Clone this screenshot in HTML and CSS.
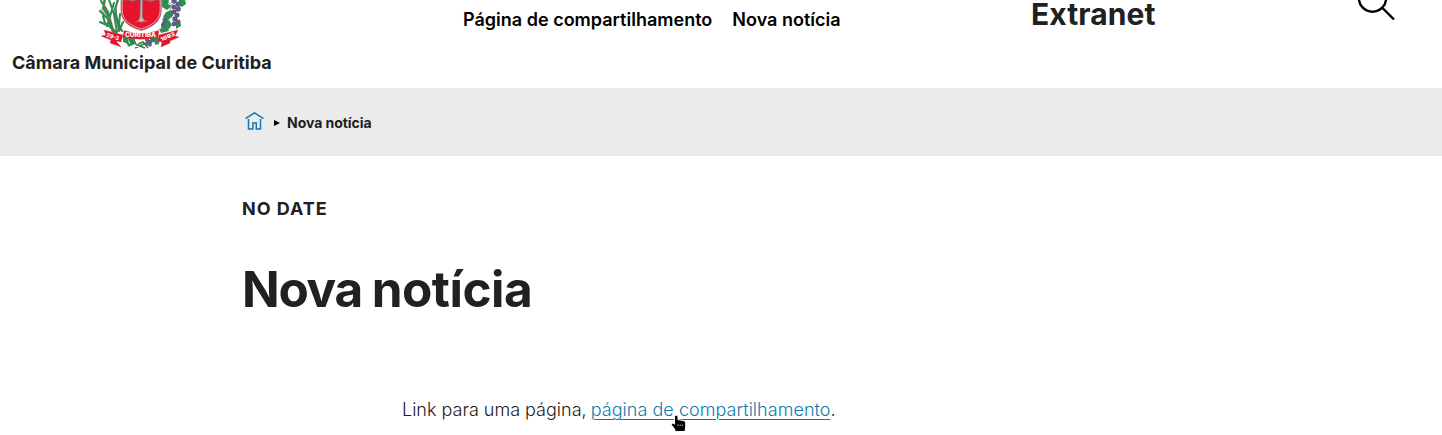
FILE: index.html
```html
<!DOCTYPE html>
<html lang="pt-br">
<head>
<meta charset="utf-8">
<title>Nova notícia</title>
<link rel="stylesheet" href="styles.css">
</head>
<body>
<header class="header">
  <a class="brand">
    <svg class="emblem" viewBox="0 0 104 52" aria-hidden="true">
      <g fill="none" stroke="#2f8f50" stroke-width="2.1" stroke-linecap="round">
        <path d="M11 1l7 11 5 18M19 0l5 14 3 18M28 0l-3 9 4 20M10 11l8 8 5 13M10 22l9 4 7 7M30 14l-1 11 3 6M15 0l-2 8 5 8M24 3l-7 23M33 22l-4 9M13 16l2 7 10 8"/>
      </g>
      <g fill="none" stroke="#74624a" stroke-width=".7">
        <path d="M13 0l11 32M27 0l-1 17 5 13M11 9l14 22M73 0l10 5-7 11 3 7-8 8M92 0l-4 9-8 8"/>
      </g>
      <g fill="#2f8f50">
        <path d="M72 0h7l-1 4 4 2-5 4-5-3zM89 0h6l1 4-4 3-4-2zM76 12l6-2 1 6-5 4-5-3zM72 22l7-2 3 5-4 5-7-2zM86 23l4-4 1 7-5 3zM69 29l8-2 2 4-8 2z"/>
        <path d="M33 36l5 2 1 6-6-2zM38 38l6-1 2 6-5 3zM36 43l6 1-3 3zM58 37l6 1 4-2-1 7-5-1zM65 38l5-1-1 7-4 1z"/>
      </g>
      <path d="M39 38l8 7 8 3M67 38l-13 6-9 4M48 44l5-2 5 6" fill="none" stroke="#35814a" stroke-width="1.5"/>
      <g fill="#615986">
        <circle cx="84" cy="1" r="2.7"/><circle cx="88" cy="4" r="2.5"/><circle cx="84" cy="7" r="2.5"/><circle cx="88" cy="9" r="2.8"/><circle cx="84" cy="12" r="2.4"/><circle cx="87" cy="15" r="2.5"/><circle cx="85" cy="19" r="2.7"/><circle cx="88" cy="22" r="2.3"/><circle cx="84" cy="24" r="2.4"/>
        <circle cx="75" cy="20" r="2.5"/><circle cx="73" cy="25" r="2"/>
        <circle cx="57" cy="40" r="2"/><circle cx="60" cy="42" r="2.3"/><circle cx="57" cy="44" r="1.700"/><circle cx="60" cy="45" r="1.800"/>
      </g>
      <path d="M31 0v10c0 12 9 17 20.300 20.500C63 27 71.300 21 71.300 10V0z" fill="#e4152c" stroke="#80777a" stroke-width=".7"/>
      <path d="M32.200 0v10c0 11 8.500 15.500 19 19C62 25.500 70.200 20 70.200 10V0" fill="none" stroke="#fff" stroke-width=".6"/>
      <path d="M50.500 0h2l-.2 17 2 3.500 3.500 1.200-5-.3-1.800.9-2-.9-4 .7 3.500-1.700 1.500-3.400z" fill="#c4b6b0" stroke="#80736f" stroke-width=".5"/>
      <path d="M40 0l2 1.200L45 0M57 0l4 1.200L64 0" fill="none" stroke="#a9928c" stroke-width=".8"/>
      <g fill="#e4152c" stroke="#aa4854" stroke-width=".4">
        <path d="M14 30l19 5-2 7-5-1 5 6-11-4 1-3-10-4 5-1z"/>
        <path d="M88 30l-19 5-1 6 4 1-1 5 9-4v-2l9-4-4-1z"/>
        <path d="M34 30.500q17 6 35 0l-1 6.500q-17 4.500-35 0z"/>
      </g>
      <g class="ribbon-text">
        <text x="35" y="37.300" textLength="31" lengthAdjust="spacingAndGlyphs">CURITIBA</text>
        <text x="16" y="36.800" textLength="13" lengthAdjust="spacingAndGlyphs" transform="rotate(16 16 36.800)">29-3</text>
        <text x="71.500" y="41.200" textLength="15" lengthAdjust="spacingAndGlyphs" transform="rotate(-22 71.500 41.200)">1693</text>
      </g>
    </svg>
    <span class="brand-name">Câmara Municipal de Curitiba</span>
  </a>
  <nav class="nav"><a>Página de compartilhamento</a><a>Nova notícia</a></nav>
  <div class="site-name">Extranet</div>
  <svg class="search" viewBox="0 0 42 24" aria-label="Buscar"><circle cx="16.500" cy="-2" r="13.700"/><path d="M26.500 8L38 19.500"/></svg>
</header>
<div class="breadcrumbs">
  <svg class="home" viewBox="0 0 20 20" aria-label="Início"><path d="M.5 7.700l9-5.900 9 5.900M3.500 8v9.900h4.400v-5.800h3.400v5.800h4.200V8"/></svg>
  <svg class="arrow" viewBox="0 0 6 6" aria-hidden="true"><path d="M0 0l6 3-6 3z"/></svg>
  <span class="crumb">Nova notícia</span>
</div>
<main class="content">
  <p class="date">No date</p>
  <h1 class="title"><span class="title-lead">Nova</span> notícia</h1>
  <p class="text">Link para uma página, <a class="link">página de compartilhamento</a>.</p>
</main>
<svg class="cursor" viewBox="0 0 20 22" aria-hidden="true">
  <path d="M6.500 10V5c0-2.300 3.500-2.300 3.500 0v2.700l2.500.3 2.700.6c1.700.2 2.500.9 2.500 2.500V15l-.8 4.500H7.200l-.7-2.500-2.700-3.500c-1-2 .3-3.200 2.700-1.300z"/>
  <path class="knuckles" d="M10 12.500V14M12.200 12.500V14M14.400 12.500V14"/>
</svg>
</body>
</html>
```

FILE: styles.css
```css
* { box-sizing: border-box; }
body {
  margin: 0;
  height: 435px;
  overflow: hidden;
  background: #fff;
  color: #212121;
  font-family: Inter, "Liberation Sans", sans-serif;
}
.header {
  display: grid;
  grid-template-columns: 451px 568px 321px 1fr;
  align-items: start;
  height: 88px;
  padding-left: 12px;
}
.brand { display: flex; flex-direction: column; }
.emblem { width: 104px; height: 52px; margin-left: 78px; }
.ribbon-text { fill: #fff; font-size: 5.500px; font-weight: 800; }
.brand-name { font-size: 18px; font-weight: 700; line-height: 22px; white-space: nowrap; }
.nav {
  display: flex;
  gap: 20px;
  padding-top: 9px;
  color: #000;
  font-size: 18px;
  font-weight: 600;
  line-height: 22px;
  letter-spacing: .01px;
}
.site-name { font-size: 30px; font-weight: 700; line-height: 28px; letter-spacing: .1px; }
.search {
  width: 42px;
  height: 24px;
  margin-left: 4px;
  fill: none;
  stroke: #000;
  stroke-width: 2.400;
}
.breadcrumbs {
  display: flex;
  align-items: center;
  height: 68px;
  padding: 1px 0 0 245px;
  background: #ebebeb;
}
.home {
  width: 20px;
  height: 20px;
  margin-top: -4px;
  fill: none;
  stroke: #117aad;
  stroke-width: 1.500;
}
.arrow { width: 6px; height: 6px; margin: 0 7px 0 9px; }
.crumb { font-size: 14px; font-weight: 700; line-height: 20px; letter-spacing: -.04px; }
.content { padding: 42px 242px 0; }
.date {
  margin: 0;
  font-size: 18px;
  font-weight: 700;
  line-height: 22px;
  letter-spacing: .95px;
  text-transform: uppercase;
}
.title {
  margin: 39px 0 0;
  font-size: 49.500px;
  font-weight: 700;
  line-height: 60px;
  letter-spacing: -.5px;
  word-spacing: -1.500px;
}
.title-lead { letter-spacing: -1.300px; }
.text { margin: 80px 0 0 160px; font-size: 18px; font-weight: 300; line-height: 22px; }
.link {
  margin-left: -1px;
  color: #117aad;
  letter-spacing: .04px;
  text-decoration: underline;
  text-decoration-thickness: 1px;
  text-underline-offset: 3px;
}
.cursor {
  position: absolute;
  left: 668px;
  top: 412px;
  width: 20px;
  height: 22px;
  fill: #000;
  stroke: #fff;
  stroke-width: 1;
}
.knuckles { stroke-width: .7; }
```
